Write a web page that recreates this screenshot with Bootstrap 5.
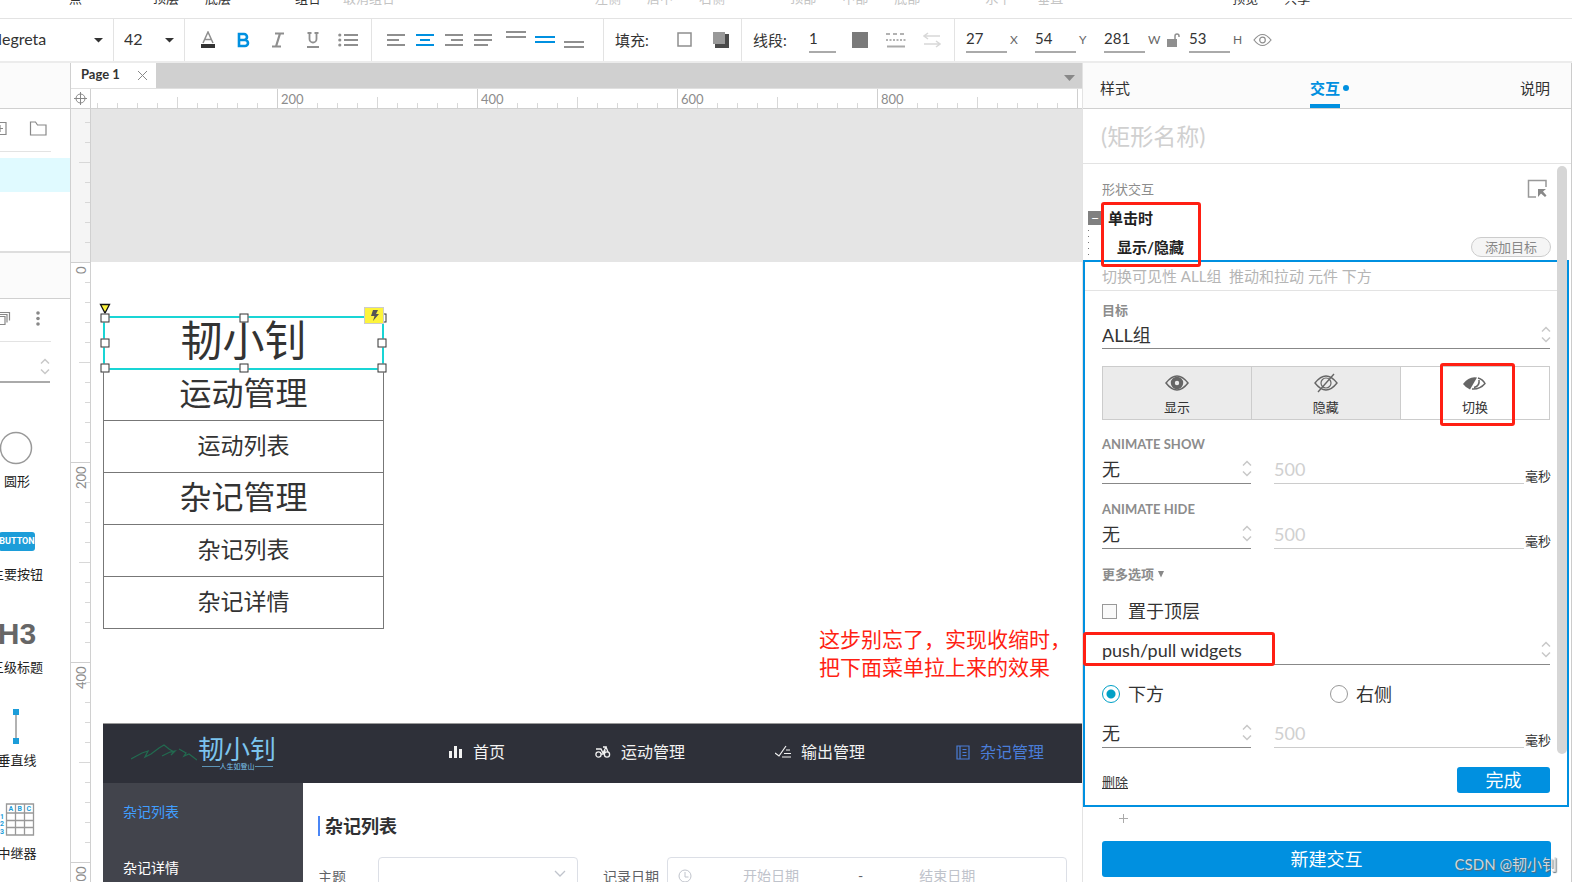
<!DOCTYPE html>
<html lang="zh-CN">
<head>
<meta charset="utf-8">
<meta name="viewport" content="width=device-width, initial-scale=1">
<title>Page 1</title>
<link rel="stylesheet" href="https://cdn.jsdelivr.net/npm/bootstrap@5.3.0/dist/css/bootstrap.min.css">
<style>
:root{--blue:#0090e0;--ink:#333;--mute:#8c8c8c;--line:#e3e3e3;--edge:#d0d0d0;--red:#ff1f13}
body{font-family:Lato,"Noto Sans CJK SC",sans-serif;font-size:13px;line-height:20px;color:var(--ink);background:#fff}
svg{display:block;flex:none}
button{font-family:inherit}
.tool{border:0;background:none;padding:0;width:20px;height:20px;display:flex;align-items:center;justify-content:center;flex:none;color:#8f8f8f}
.tool.on{color:var(--blue)}
/* menu labels */
.menubar{height:19px;border-bottom:1px solid var(--line);overflow:hidden;white-space:nowrap;flex:none}
.menubar span{line-height:20px;margin-top:-12px}
.faint{color:#c4c4c4}
.g1{margin-left:69px}.g2{margin-left:71px;gap:26px}.g3{margin-left:64px;gap:22px}.g4{margin-left:200px;gap:26px}.g5{margin-left:65px;gap:26px}.g6{margin-left:169px;gap:26px}
/* toolbar */
.toolbar{height:44px;border-bottom:2px solid #ececec;flex:none}
.workspace{flex:1 1 0;min-height:0}
.sect{border-right:1px solid var(--line);flex:none;display:flex;align-items:center}
.s-font{width:114px}.s-size{width:71px;padding-left:10px}.s-style{width:187px;padding-left:13px;gap:15px}.s-align{width:232px;padding-left:14px;gap:9px}.s-fill{width:138px;padding-left:11px}.s-line{width:213px;padding-left:11px}.s-pos{padding-left:11px;border:0}
.plain{border:0;background:none;padding:0;outline:0;color:var(--ink);font-size:15px;height:24px;appearance:none;min-width:0}
.s-font .plain{width:94px;font-size:16px;text-indent:-10px;margin-bottom:4px}
.s-size .plain{width:41px;font-size:16px;margin-bottom:4px}
.tb-label{font-size:15px}
.s-fill .tb-label{width:60px}.s-line .tb-label{width:56px}
.under{border-bottom:2px solid #aaa;height:26px;padding-bottom:2px}
.w-xy{width:41px}.w-one{width:27px}
.axis{width:28px;padding-left:3px;font-size:12px;color:#666}
.ax-w{width:22px}
/* left side */
.left{width:71px;border-right:1px solid var(--edge);overflow:hidden}
.band{height:46px;background:#fbfbfb;border-bottom:1px solid var(--edge)}
.iconrow{height:43px;width:51px;border-bottom:1px solid var(--line);position:relative}
.pick{height:34px;background:#e0faff;margin-top:6px}
.fill-gap{height:61px;border-bottom:2px solid #dedede}
.libsel{width:50px;height:41px;border-bottom:2px solid #aaa;padding-top:16px}
.shape{width:106px;margin-left:-36px;height:93px;border:0;background:none;padding:0;color:#222;flex:none;font-size:13px}
.shape .art{height:40px;margin-bottom:3px}
.h3art{font:bold 30px/40px "Liberation Sans",sans-serif;color:#666}
.btnart{font:bold 9px/19px Roboto,sans-serif;background:#1c9dd9;color:#fff;border-radius:3px;width:36px;height:19px}
/* tabs and rulers */
.tabs{background:#d0d0d0;height:26px;border-bottom:1px solid #e0e0e0}
.pagetab{background:#fff;width:85px;font-size:13px;font-weight:700;padding:0 9px 4px 10px}
.corner{width:20px;height:20px;border-right:1px solid var(--edge);border-bottom:1px solid var(--edge)}
.rulerx{height:20px;border-bottom:1px solid var(--edge);padding-left:190px;overflow:hidden;color:#8c8c8c;font-size:13px;
background:linear-gradient(90deg,#cfcfcf 1px,transparent 1px) -14px 0/200px 100% repeat-x,linear-gradient(90deg,#d8d8d8 1px,transparent 1px) -14px 8px/100px 100% repeat-x,linear-gradient(90deg,#d8d8d8 1px,transparent 1px) -14px 14px/20px 100% repeat-x,#fff}
.rulerx span{width:200px;flex:none}
.rulery{width:20px;border-right:1px solid var(--edge);padding-top:157px;overflow:hidden;color:#8c8c8c;font-size:13px;
background:linear-gradient(#cfcfcf 1px,transparent 1px) 0 -47px/100% 200px repeat-y,linear-gradient(#d8d8d8 1px,transparent 1px) 8px -47px/100% 100px repeat-y,linear-gradient(#d8d8d8 1px,transparent 1px) 14px -47px/100% 20px repeat-y,linear-gradient(#f5f5f5 153px,#fff 153px)}
.rulery span{height:200px;flex:none;writing-mode:vertical-rl;transform:rotate(180deg);text-align:right;line-height:20px}
/* canvas */
.board{overflow:hidden;background:#fff}
.outside{height:153px;background:#e5e5e5}
.artboard{padding:54px 0 0 12px}
.frame{width:281px}
.stack{border:1px solid #777;color:#333}
.stack li{height:52px;border-top:1px solid #777;display:flex;align-items:center;justify-content:center;font-size:23px;padding-bottom:4px}
.stack li:first-child{border:0;height:51px;font-size:42px;padding-bottom:6px}
.stack .big{font-size:32px}
.sel{inset:0 0 auto;height:54px;border:2px solid #19d5d5;position:absolute}
.hd{position:absolute;width:9px;height:9px;background:#fff;border:1px solid #333;transform:translate(-50%,-50%)}
.bolt{position:absolute;right:-2px;top:-11px;width:20px;height:17px;background:#fdf43c;border:1px solid #ccc;padding:0}
.flag{position:absolute;left:-6px;top:-15px}
.memo{position:absolute;right:11px;top:516px;width:252px;font-size:21px;line-height:28px;color:var(--red)}
/* site placed on the canvas */
.site{margin-top:94px;font-size:14px}
.site-head{height:60px;background:#2e3039;border-top:1px solid #999;font-size:16px;padding-bottom:3px}
.site-head a{color:#f2f2f2;text-decoration:none;display:flex;align-items:center;gap:10px;flex:none}
.site-head a.cur{color:#4a7dd8}
.logo{width:150px;margin-left:28px;margin-right:168px;color:#7cc4ee;gap:1px}
.logo b{font:400 26px/28px "Noto Sans CJK SC",sans-serif}
.logo i{font:400 7px/8px "Noto Sans CJK SC",sans-serif}
.logo hr{width:18px;margin:0;opacity:1;border-color:#5d93b5}
.n2{margin-left:90px}.n3{margin-left:90px}.n4{margin-left:91px}
.site-side{width:200px;background:#42444c;flex:none}
.site-side a{display:block;height:56px;line-height:58px;padding-left:20px;color:#fff;text-decoration:none}
.site-side a.cur{color:#409eff}
.site-main{padding:33px 0 0 15px;color:#606266}
.site-main h2{font-size:18px;line-height:20px;font-weight:700;color:#303133;border-left:2px solid #4a86f5;padding-left:5px;margin:0 0 21px}
.box{border:1px solid #dcdfe6;border-radius:4px;height:40px;background:#fff}
.box input{border:0;outline:0;padding:0;width:56px;font-size:14px}
.box input::placeholder{color:#bfc3cb}
.box select{appearance:none;border:0;background:none;width:100%;height:100%}
/* inspector */
.panel{width:490px;flex:none;border-left:1px solid #e3e3e3;border-right:1px solid #ccc;position:relative}
.ptabs{height:46px;background:#fbfbfb;border-bottom:1px solid var(--edge);padding:0 21px 0 17px;font-size:15px}
.ptabs button{border:0;background:none;padding:5px 0 0;height:45px;color:#333;position:relative}
.ptabs .on{color:var(--blue);font-weight:700;border-bottom:4px solid var(--blue);padding-top:8px}
.ptabs .on::after{content:"";position:absolute;right:-9px;top:22px;width:6px;height:6px;border-radius:50%;background:var(--blue)}
.namebox{height:55px;border:0;border-bottom:1px solid var(--line);padding:0 18px;font-size:23px;width:100%;outline:0}
.namebox::placeholder{color:#d0d0d0;opacity:1}
.pad{padding:0 20px 0 19px}
.evt{font-size:15px;font-weight:700;color:#222}
.addt{height:20px;width:80px;border:1px solid #ccc;border-radius:10px;background:#f5f5f5;color:#888;font-size:13px;line-height:18px;padding:0}
.mark-red{position:absolute;border:3px solid var(--red);border-radius:3px;pointer-events:none;z-index:3}
.m-evt{left:18px;top:38px;width:100px;height:65px}
.m-tog{left:39px;top:-4px;width:75px;height:63px}
.m-push{left:-19px;top:-3px;width:192px;height:34px}
.fold{position:absolute;left:-14px;top:3px;width:14px;height:14px;background:#808080;border:0;padding:0;color:#fff;font-size:14px;line-height:12px}
.thread{position:absolute;left:5px;top:66px;height:30px;width:1px;background:repeating-linear-gradient(#777 0 1px,transparent 1px 6px)}
.editor{margin:2px 2px 0 0;border:2px solid var(--blue)}
.editor>.in{padding:0 17px}
.brief{height:29px;border-bottom:1px solid var(--line);padding:0 17px;font-size:15px;line-height:29px;color:#b5b5b5;white-space:pre}
.cap{display:block;font-size:13px;line-height:20px;font-weight:700;color:#8c8c8c}
.pickbox{position:relative;border-bottom:1px solid #888;height:30px}
.pickbox select{appearance:none;border:0;background:none;width:100%;height:29px;padding:1px 0 0;outline:0;font-size:18px;line-height:28px;color:#333}
.pickbox svg{position:absolute;right:-1px;top:6px}
.half{width:149px}
.msin{border:0;border-bottom:1px solid #ccc;height:30px;padding:0;font-size:18px;margin-left:23px;min-width:0;outline:0}
.msin::placeholder{color:#d0d0d0;opacity:1}
.ms{width:26px;padding-left:1px;line-height:20px;margin-top:12px;white-space:nowrap}
.seg{margin-top:17px;height:54px;border:1px solid #ccc}
.seg button{border:0;border-right:1px solid #ccc;background:#ebebeb;padding:3px 0 0;font-size:13px;color:#333;position:relative}
.seg button:last-child{border:0;background:#fff}
.seg svg{margin:0 auto 3px}
.chk{font-size:18px;height:24px}
.chk input{margin:0;appearance:none;width:15px;height:15px;border:1px solid #999;background:#fafafa}
.chk input[type=radio]{width:18px;height:18px;border-radius:50%;background:#fff}
.chk input[type=radio]:checked{border:1px solid #00a0c6;background:radial-gradient(#00a0c6 4px,#fff 5px)}
.blue{background:var(--blue);color:#fff;border:0;border-radius:3px;font-size:18px;padding:0}
.done{width:93px;height:26px;line-height:26px}
.new{display:block;width:100%;height:36px}
.thumb{position:absolute;right:4px;top:103px;width:10px;height:588px;border-radius:5px;background:#d6d6d6;z-index:4}
.stamp{position:absolute;right:14px;bottom:7px;font-size:15px;line-height:22px;color:#ccd6de;text-shadow:1px 1px 1px #5a6a75}
</style>
</head>
<body class="vh-100 d-flex flex-column overflow-hidden">
<svg width="0" height="0" class="position-absolute"><defs>
<symbol id="ud" viewBox="0 0 10 17"><path d="M1 5.500l4-4 4 4M1 11.500l4 4 4-4" fill="none" stroke="#c8c8c8" stroke-width="1.500"/></symbol>
<symbol id="dn" viewBox="0 0 9 5"><path d="M0 0h9L4.500 4.500z" fill="currentColor"/></symbol>
</defs></svg>

<div class="menubar d-flex">
  <div class="d-flex g1"><span>点</span></div>
  <div class="d-flex g2"><span>顶层</span><span>底层</span></div>
  <div class="d-flex g3"><span>组合</span><span class="faint">取消组合</span></div>
  <div class="d-flex g4 faint"><span>左侧</span><span>居中</span><span>右侧</span></div>
  <div class="d-flex g5 faint"><span>顶部</span><span>中部</span><span>底部</span></div>
  <div class="d-flex g5 faint"><span>水平</span><span>垂直</span></div>
  <div class="d-flex g6"><span>预览</span><span>共享</span></div>
</div>

<div class="toolbar d-flex">
  <div class="sect s-font"><input class="plain" aria-label="字体" value="Negreta"><svg width="9" height="5"><use href="#dn"/></svg></div>
  <div class="sect s-size"><input class="plain" aria-label="字号" value="42"><svg width="9" height="5"><use href="#dn"/></svg></div>
  <div class="sect s-style">
    <button class="tool" aria-label="颜色"><svg width="16" height="18"><path d="M3 12L8 1l5 11M5 8.500h6" fill="none" stroke="currentColor" stroke-width="1.500"/><path d="M1 13h14v4H1z" fill="#333"/></svg></button>
    <button class="tool on" aria-label="粗体"><svg width="14" height="16"><path d="M3 2h5a2.800 2.800 0 010 6H3zM3 8h6a3 3 0 010 6H3z" fill="none" stroke="currentColor" stroke-width="2.600"/></svg></button>
    <button class="tool" aria-label="斜体"><svg width="14" height="16"><path d="M4 1.500h9M1 14.500h9M9 1.500L5 14.500" fill="none" stroke="currentColor" stroke-width="2.200"/></svg></button>
    <button class="tool" aria-label="下划线"><svg width="14" height="16"><path d="M3.500 0v7a3.500 3.500 0 007 0V0M1.500 1h4M8.500 1h4" fill="none" stroke="currentColor" stroke-width="1.800"/><path d="M1 14h12v2H1z" fill="currentColor"/></svg></button>
    <button class="tool" aria-label="列表"><svg width="20" height="14"><path d="M6 2h14M6 7h14M6 12h14" stroke="currentColor" stroke-width="2"/><g fill="currentColor"><circle cx="1.800" cy="2" r="1.600"/><circle cx="1.800" cy="7" r="1.600"/><circle cx="1.800" cy="12" r="1.600"/></g></svg></button>
  </div>
  <div class="sect s-align">
    <button class="tool" aria-label="左对齐"><svg width="18" height="14"><path d="M0 2h18M0 7h12M0 12h18" stroke="currentColor" stroke-width="2"/></svg></button>
    <button class="tool on" aria-label="居中对齐"><svg width="18" height="14"><path d="M0 2h18M4 7h10M0 12h18" stroke="currentColor" stroke-width="2"/></svg></button>
    <button class="tool" aria-label="右对齐"><svg width="18" height="14"><path d="M0 2h18M6 7h12M0 12h18" stroke="currentColor" stroke-width="2"/></svg></button>
    <button class="tool" aria-label="两端对齐"><svg width="18" height="14"><path d="M0 2h18M0 7h18M0 12h14" stroke="currentColor" stroke-width="2"/></svg></button>
    <button class="tool ms-1" aria-label="顶部"><svg width="20" height="20"><path d="M0 2h20M0 7h20" stroke="currentColor" stroke-width="2"/></svg></button>
    <button class="tool on" aria-label="中部"><svg width="20" height="20"><path d="M0 7h20M0 12h20" stroke="currentColor" stroke-width="2"/></svg></button>
    <button class="tool" aria-label="底部"><svg width="20" height="20"><path d="M0 12h20M0 17h20" stroke="currentColor" stroke-width="2"/></svg></button>
  </div>
  <div class="sect s-fill"><span class="tb-label">填充:</span>
    <button class="tool" aria-label="填充颜色"><svg width="16" height="16"><path d="M1 1h13v13H1z" fill="#fff" stroke="currentColor" stroke-width="1.500"/></svg></button>
    <button class="tool ms-3" aria-label="阴影"><svg width="18" height="18"><path d="M3 3h14v14H3z" fill="#4a4a4a"/><path d="M1 1h12v12H1z" fill="#999"/></svg></button>
  </div>
  <div class="sect s-line"><label class="tb-label" for="lw">线段:</label><input id="lw" class="plain under w-one" value="1">
    <button class="tool" style="margin-left:14px" aria-label="线段颜色"><svg width="16" height="16"><path d="M0 0h16v16H0z" fill="#7a7a7a"/></svg></button>
    <button class="tool ms-3" aria-label="线型"><svg width="20" height="16"><path d="M0 2h20" stroke="#999" stroke-width="1.500" stroke-dasharray="4 3"/><path d="M0 8h20" stroke="#999" stroke-width="1.500" stroke-dasharray="2 1.500"/><path d="M1 14.500h18" stroke="#aaa" stroke-width="2"/></svg></button>
    <button class="tool ms-3" aria-label="箭头"><svg width="18" height="16"><path d="M5 1L1 4l4 3M1 4h16M13 9l4 3-4 3M17 12H1" fill="none" stroke="#d8d8d8" stroke-width="1.500"/></svg></button>
  </div>
  <div class="sect s-pos">
    <input id="px" class="plain under w-xy" value="27"><label for="px" class="axis">X</label>
    <input id="py" class="plain under w-xy" value="54"><label for="py" class="axis">Y</label>
    <input id="pw" class="plain under w-xy" value="281"><label for="pw" class="axis ax-w">W</label>
    <button class="tool" style="width:22px;padding-right:9px" aria-label="锁定比例"><svg width="13" height="15"><path d="M0 6h10v8H0z" fill="currentColor"/><path d="M8 7V3a2 2 0 014 0v1" fill="none" stroke="currentColor" stroke-width="1.500"/></svg></button>
    <input id="ph" class="plain under w-xy" value="53"><label for="ph" class="axis ax-w">H</label>
    <button class="tool" aria-label="可见"><svg width="19" height="14"><path d="M1 7q8.500-11 17 0q-8.500 11-17 0z" fill="none" stroke="currentColor" stroke-width="1.200"/><circle cx="9.500" cy="7" r="2.800" fill="none" stroke="currentColor" stroke-width="1.200"/></svg></button>
  </div>
</div>

<div class="workspace d-flex">
  <aside class="left d-flex flex-column flex-shrink-0">
    <div class="band flex-shrink-0"></div>
    <div class="iconrow flex-shrink-0"><svg width="50" height="42"><g fill="none" stroke="#888" stroke-width="1.200"><path d="M-6 13.500H6v12H-6M0 16v7M-3 19.500h6M30.500 13h5l2 3h8.500v10H30.500z"/></g></svg></div>
    <div class="pick flex-shrink-0"></div>
    <div class="fill-gap flex-shrink-0"></div>
    <div class="band flex-shrink-0"></div>
    <div class="iconrow flex-shrink-0"><svg width="50" height="42"><g fill="none" stroke="#888" stroke-width="1.200"><path d="M-6 17.500H5v8H-6M-6 15.500H7v8M-6 13.500H9.500v8"/></g><g fill="#888"><circle cx="38" cy="14" r="1.800"/><circle cx="38" cy="19.500" r="1.800"/><circle cx="38" cy="25" r="1.800"/></g></svg></div>
    <div class="libsel flex-shrink-0 d-flex justify-content-end"><svg width="10" height="17"><use href="#ud"/></svg></div>
    <div style="height:30px" class="flex-shrink-0"></div>
    <button class="shape"><span class="art d-flex justify-content-center align-items-center"><svg width="34" height="34"><circle cx="16" cy="17" r="15.500" fill="none" stroke="#999" stroke-width="1.500"/></svg></span><span class="d-block">圆形</span></button>
    <button class="shape"><span class="art d-flex justify-content-center align-items-center"><span class="btnart">BUTTON</span></span><span class="d-block">主要按钮</span></button>
    <button class="shape"><span class="art h3art d-block">H3</span><span class="d-block">三级标题</span></button>
    <button class="shape"><span class="art d-flex justify-content-center align-items-center"><svg width="10" height="36"><path d="M4 3v30" stroke="#999" stroke-width="1.500"/><path d="M1 0h6v6H1zM1 29h6v6H1z" fill="#1c9dd9"/></svg></span><span class="d-block">垂直线</span></button>
    <button class="shape"><span class="art d-flex justify-content-center align-items-center"><svg width="38" height="34"><path d="M10.500 1h27v31h-27zM10.500 10h27M10.500 17.500h27M10.500 24.500h27M19.500 1v31M28.500 1v31" fill="none" stroke="#999" stroke-width="1.300" transform="translate(-2 0)"/><g fill="#1c9dd9" font-family="Roboto" font-weight="700" font-size="7"><text x="10.500" y="8">A</text><text x="19.500" y="8">B</text><text x="28.500" y="8">C</text><text x="2" y="16">1</text><text x="2" y="23">2</text><text x="2" y="31">3</text></g></svg></span><span class="d-block">中继器</span></button>
  </aside>

  <main class="flex-grow-1 d-flex flex-column overflow-hidden">
    <div class="tabs d-flex justify-content-between flex-shrink-0">
      <div class="pagetab d-flex align-items-center justify-content-between">Page 1<svg width="9" height="9" class="mt-1"><path d="M0 0l9 9M9 0L0 9" stroke="#888"/></svg></div>
      <svg width="20" height="26"><path d="M2 12h11l-5.500 6z" fill="#888"/></svg>
    </div>
    <div class="d-flex flex-shrink-0">
      <div class="corner flex-shrink-0"><svg width="19" height="19"><g fill="none" stroke="#888"><circle cx="9.500" cy="9.500" r="4.500"/><path d="M3 9.500h13M9.500 3v13"/></g></svg></div>
      <div class="rulerx d-flex flex-grow-1"><span>200</span><span>400</span><span>600</span><span>800</span></div>
    </div>
    <div class="workspace d-flex">
      <div class="rulery d-flex flex-column flex-shrink-0"><span>0</span><span>200</span><span>400</span><span>600</span></div>
      <div class="board flex-grow-1 position-relative">
        <div class="outside"></div>
        <div class="artboard">
          <div class="frame position-relative">
            <ul class="stack list-unstyled mb-0">
              <li>韧小钊</li><li class="big">运动管理</li><li>运动列表</li><li class="big">杂记管理</li><li>杂记列表</li><li>杂记详情</li>
            </ul>
            <div class="sel">
              <svg class="flag" width="12" height="12"><path d="M1.500 1.500h9L6 10z" fill="#fdf43c" stroke="#111" stroke-width="1.300"/></svg>
              <i class="hd" style="left:0;top:0"></i><i class="hd" style="left:50%;top:0"></i><i class="hd" style="left:100%;top:0"></i>
              <i class="hd" style="left:0;top:50%"></i><i class="hd" style="left:100%;top:50%"></i>
              <i class="hd" style="left:0;top:100%"></i><i class="hd" style="left:50%;top:100%"></i><i class="hd" style="left:100%;top:100%"></i>
              <button class="bolt" aria-label="交互"><svg width="18" height="15"><path d="M8 2h5l-2 4h3l-6 7 1.500-5H6z" fill="#555"/></svg></button>
            </div>
          </div>
          <div class="site">
            <div class="site-head d-flex align-items-center">
              <div class="logo d-flex align-items-center">
                <svg width="66" height="20"><path d="M0 17l11-6 6-2-3 6 6-3 8-6 5-3 5 4 5 3M31 14l8-4 5-1-4 4M48 7l7 4-2 3 5-2 8 6" fill="none" stroke="#22694f" stroke-width="1.300"/></svg>
                <div><b class="d-block">韧小钊</b><div class="d-flex align-items-center justify-content-center"><hr><i>人生如登山</i><hr></div></div>
              </div>
              <a href="#"><svg width="14" height="14"><path d="M0 6h3v7H0zM5 1h3v12H5zM10 4h3v9h-3z" fill="currentColor"/></svg>首页</a>
              <a href="#" class="n2"><svg width="16" height="16"><g fill="none" stroke="currentColor" stroke-width="1.300"><circle cx="3.500" cy="10.500" r="2.600"/><circle cx="12" cy="10.500" r="2.600"/><path d="M1 5h5l2 4 3-6H8M6 10q4 1 4-4M11 3l2 5"/></g></svg>运动管理</a>
              <a href="#" class="n3"><svg width="16" height="14"><path d="M0 8l4 3 7-10M11 5h4M9 8.500h7M7 12h9" fill="none" stroke="currentColor" stroke-width="1.200"/></svg>输出管理</a>
              <a href="#" class="n4 cur"><svg width="14" height="15"><path d="M1 1h12v13H1zM4 1v13M6.500 4.500h4M6.500 7.500h4M6.500 10.500h4" fill="none" stroke="currentColor" stroke-width="1.200"/></svg>杂记管理</a>
            </div>
            <div class="d-flex">
              <nav class="site-side"><a href="#" class="cur">杂记列表</a><a href="#">杂记详情</a></nav>
              <section class="site-main flex-grow-1">
                <h2>杂记列表</h2>
                <div class="d-flex align-items-center">
                  <label for="topic" style="width:60px">主题</label>
                  <div class="box position-relative" style="width:200px"><select id="topic"></select><svg class="position-absolute end-0 me-2" style="top:12px" width="18" height="8"><path d="M4 1l5 5 5-5" fill="none" stroke="#c0c4cc" stroke-width="1.300"/></svg></div>
                  <label for="from" style="width:64px;margin-left:25px">记录日期</label>
                  <div class="box d-flex align-items-center" style="width:400px;padding:0 0 3px 10px">
                    <svg width="14" height="14"><g fill="none" stroke="#c0c4cc"><circle cx="7" cy="7" r="6"/><path d="M7 3v5h3.500"/></g></svg>
                    <input id="from" placeholder="开始日期" style="margin-left:51px"><span style="margin:0 56px 0 59px">-</span><input aria-label="结束日期" placeholder="结束日期">
                  </div>
                </div>
              </section>
            </div>
          </div>
        </div>
        <div class="memo">这步别忘了，实现收缩时，把下面菜单拉上来的效果</div>
      </div>
    </div>
  </main>

  <aside class="panel">
    <div class="ptabs d-flex justify-content-between"><button>样式</button><button class="on">交互</button><button>说明</button></div>
    <input class="namebox d-block" aria-label="名称" placeholder="(矩形名称)">
    <div class="position-relative">
      <div class="pad">
        <div class="d-flex justify-content-between align-items-center" style="padding-top:15px;color:#8c8c8c">形状交互<svg width="20" height="20" class="me-1"><path d="M19 8V1.500H1.500V18H9" fill="none" stroke="#999" stroke-width="1.500"/><path d="M11 10h8l-3 2.500 3.500 4-1.500 1.500-4-3.500L11 18z" fill="#888"/></svg></div>
        <div class="evt position-relative" style="margin:9px 0 8px"><button class="fold" aria-label="折叠">−</button><span style="padding-left:6px">单击时</span></div>
        <div class="d-flex justify-content-between align-items-center" style="height:22px"><span class="evt" style="padding-left:15px">显示/隐藏</span><button class="addt">添加目标</button></div>
      </div>
      <div class="thread"></div>
      <div class="mark-red m-evt"></div>
      <div class="editor">
        <div class="brief">切换可见性 ALL组  推动和拉动 元件 下方</div>
        <div class="in">
          <label class="cap" for="tgt" style="padding-top:9px">目标</label>
          <div class="pickbox" style="height:29px"><select id="tgt"><option>ALL组</option></select><svg width="10" height="17"><use href="#ud"/></svg></div>
          <div class="seg d-flex">
            <button class="flex-fill w-100"><svg width="24" height="22"><path d="M1 11q11-14 22 0q-11 14-22 0z" fill="none" stroke="#666" stroke-width="1.500"/><circle cx="12" cy="11" r="4.200" fill="none" stroke="#666" stroke-width="4"/></svg>显示</button>
            <button class="flex-fill w-100"><svg width="24" height="22"><path d="M1 11q11-14 22 0q-11 14-22 0zM20 2L4 20" fill="none" stroke="#666" stroke-width="1.400"/><circle cx="12" cy="11" r="5" fill="none" stroke="#666" stroke-width="1.200"/></svg>隐藏</button>
            <button class="flex-fill w-100"><svg width="26" height="22"><path d="M1 12Q7 4 15 5.500L8 17.500Q4 16 1 12z" fill="#666"/><path d="M16 6q5 1.500 7 5.500q-5 6-13 5.500M17 8q1 6-5 7.500" fill="none" stroke="#666" stroke-width="1.500"/></svg>切换<i class="mark-red m-tog"></i></button>
          </div>
          <label class="cap" for="as" style="padding-top:14px">ANIMATE SHOW</label>
          <div class="d-flex"><div class="pickbox half"><select id="as"><option>无</option></select><svg width="10" height="17"><use href="#ud"/></svg></div><input class="msin flex-fill" aria-label="显示时长" placeholder="500"><span class="ms">毫秒</span></div>
          <label class="cap" for="ah" style="padding-top:13px">ANIMATE HIDE</label>
          <div class="d-flex"><div class="pickbox half"><select id="ah"><option>无</option></select><svg width="10" height="17"><use href="#ud"/></svg></div><input class="msin flex-fill" aria-label="隐藏时长" placeholder="500"><span class="ms">毫秒</span></div>
          <div class="cap d-flex align-items-center" style="margin-top:13px">更多选项<svg class="ms-1" width="6" height="7"><path d="M0 0h6L3 6.500z" fill="#888"/></svg></div>
          <label class="chk d-flex align-items-center" style="margin-top:15px;gap:11px"><input type="checkbox">置于顶层</label>
          <div class="pickbox" style="margin-top:12px"><select aria-label="推拉元件"><option>push/pull widgets</option></select><svg width="10" height="17"><use href="#ud"/></svg><div class="mark-red m-push"></div></div>
          <div class="d-flex" style="margin-top:17px"><label class="chk d-flex align-items-center" style="width:228px;gap:8px"><input type="radio" name="dir" checked>下方</label><label class="chk d-flex align-items-center" style="gap:8px"><input type="radio" name="dir">右侧</label></div>
          <div class="d-flex" style="margin-top:12px"><div class="pickbox half"><select aria-label="推拉动画"><option>无</option></select><svg width="10" height="17"><use href="#ud"/></svg></div><input class="msin flex-fill" aria-label="推拉时长" placeholder="500"><span class="ms">毫秒</span></div>
          <div class="d-flex justify-content-between align-items-center" style="padding:17px 0 12px"><a href="#" class="text-reset pt-1">删除</a><button class="blue done">完成</button></div>
        </div>
      </div>
      <div class="pad">
        <div style="height:34px;padding:7px 0 0 17px"><svg width="9" height="9"><path d="M4.500 0v9M0 4.500h9" stroke="#aaa"/></svg></div>
        <button class="blue new">新建交互</button>
      </div>
    </div>
    <div class="thumb"></div>
    <div class="stamp">CSDN @韧小钊</div>
  </aside>
</div>
<script src="https://cdn.jsdelivr.net/npm/bootstrap@5.3.0/dist/js/bootstrap.bundle.min.js"></script>
</body>
</html>
